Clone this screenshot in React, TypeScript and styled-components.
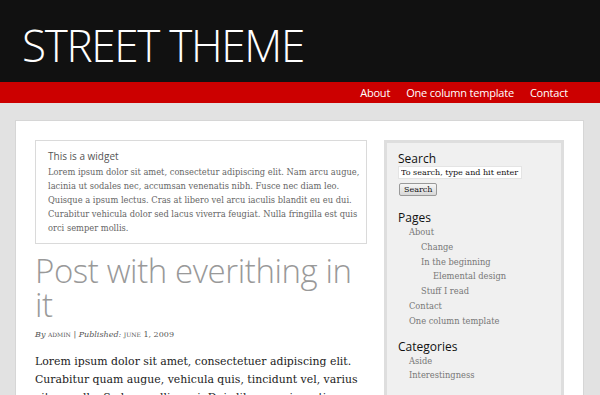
import React from 'react';
import styled, { createGlobalStyle } from 'styled-components';

const GlobalStyle = createGlobalStyle`
  html, body {
    margin: 0;
    padding: 0;
    background: #e2e2e2;
  }
  body {
    font-family: "Open Sans", "Liberation Sans", sans-serif;
    height: 395px;
    overflow: hidden;
  }
`;

const Header = styled.header`
  height: 82px;
  background: #111111;
  display: flex;
  align-items: center;
  padding-left: 22px;
`;

const SiteTitle = styled.h1`
  margin: 7px 0 0 0;
  color: #ffffff;
  font-family: "Open Sans", sans-serif;
  font-weight: 300;
  font-size: 44px;
  letter-spacing: -1.3px;
  line-height: 1;
`;

const NavBar = styled.nav`
  height: 21px;
  background: #cc0000;
  display: flex;
  justify-content: flex-end;
  align-items: center;
  gap: 16px;
  padding-right: 32px;
`;

const NavLink = styled.a`
  color: #ffffff;
  font-family: "Open Sans", sans-serif;
  font-size: 11px;
  letter-spacing: -0.2px;
  text-decoration: none;
`;

const Page = styled.div`
  padding: 17px 0 0 15px;
`;

const Card = styled.div`
  width: 569px;
  height: 300px;
  box-sizing: border-box;
  background: #ffffff;
  border: 1px solid #d6d6d6;
  display: flex;
  gap: 17px;
  padding: 19px 19px 0 19px;
  overflow: hidden;
`;

const Main = styled.div`
  width: 332px;
  flex-shrink: 0;
`;

const Widget = styled.div`
  border: 1px solid #dadada;
  padding: 8px 3px 8px 12px;
`;

const WidgetTitle = styled.div`
  font-family: "Open Sans", sans-serif;
  font-size: 10px;
  line-height: 14px;
  color: #555;
  margin-bottom: 2px;
`;

const SerifText = styled.p<{ size: number; lh: number; color: string }>`
  margin: 0;
  font-family: "DejaVu Serif", Georgia, serif;
  font-size: ${p => p.size}px;
  line-height: ${p => p.lh}px;
  color: ${p => p.color};
`;

const PostTitle = styled.h2`
  margin: 10px 0 0 0;
  font-family: "Open Sans", sans-serif;
  font-weight: 300;
  font-size: 33px;
  line-height: 34px;
  color: #999;
  letter-spacing: -0.4px;
`;

const Meta = styled.div`
  margin: 8px 0 14px 0;
  font-family: "DejaVu Serif", Georgia, serif;
  font-size: 8px;
  color: #555;
  em {
    font-style: italic;
  }
  span {
    font-variant: small-caps;
  }
`;

const Sidebar = styled.aside`
  width: 180px;
  height: 300px;
  flex-shrink: 0;
  box-sizing: border-box;
  background: #f0f0f0;
  border: 3px solid #dedede;
  padding: 8px 11px 0 11px;
`;

const SideHeading = styled.h3`
  margin: 0;
  font-family: "Open Sans", sans-serif;
  font-weight: 400;
  font-size: 12px;
  line-height: 15px;
  color: #111;
`;

const SearchInput = styled.input`
  display: block;
  width: 124px;
  height: 13px;
  box-sizing: border-box;
  border: 1px solid #e4e4e4;
  background: #fff;
  padding: 0 2px;
  margin: 0;
  font-family: "DejaVu Serif", Georgia, serif;
  font-size: 8px;
  color: #111;
  outline: none;
`;

const SearchButton = styled.button`
  display: block;
  margin: 4px 0 14px 1px;
  height: 13px;
  padding: 0 4px;
  border: 1px solid #999;
  border-radius: 2px;
  background: linear-gradient(#f6f6f6, #d8d8d8);
  font-family: "DejaVu Serif", Georgia, serif;
  font-size: 8px;
  line-height: 11px;
  color: #111;
`;

const List = styled.ul`
  list-style: none;
  margin: 0 0 10px 0;
  padding: 0;
`;

const Item = styled.li<{ level: number }>`
  padding-left: ${p => 11 + p.level * 12}px;
  font-family: "DejaVu Serif", Georgia, serif;
  font-size: 8.3px;
  line-height: 14.8px;
  color: #777;
`;

const pages: [string, number][] = [
  ['About', 0],
  ['Change', 1],
  ['In the beginning', 1],
  ['Elemental design', 2],
  ['Stuff I read', 1],
  ['Contact', 0],
  ['One column template', 0],
];

const App = (): JSX.Element => {
  return (
    <>
      <GlobalStyle />
      <Header>
        <SiteTitle>STREET THEME</SiteTitle>
      </Header>
      <NavBar>
        <NavLink href="#">About</NavLink>
        <NavLink href="#">One column template</NavLink>
        <NavLink href="#">Contact</NavLink>
      </NavBar>
      <Page>
        <Card>
          <Main>
            <Widget>
              <WidgetTitle>This is a widget</WidgetTitle>
              <SerifText size={8.3} lh={14} color="#666">
                Lorem ipsum dolor sit amet, consectetur adipiscing elit. Nam arcu augue,
                lacinia ut sodales nec, accumsan venenatis nibh. Fusce nec diam leo.
                Quisque a ipsum lectus. Cras at libero vel arcu iaculis blandit eu eu dui.
                Curabitur vehicula dolor sed lacus viverra feugiat. Nulla fringilla est quis
                orci semper mollis.
              </SerifText>
            </Widget>
            <PostTitle>Post with everithing in it</PostTitle>
            <Meta>
              <em>By</em> <span>admin</span> | <em>Published:</em> <span>june 1, 2009</span>
            </Meta>
            <SerifText size={10.9} lh={18} color="#222">
              Lorem ipsum dolor sit amet, consectetuer adipiscing elit. Curabitur quam augue,
              vehicula quis, tincidunt vel, varius vitae, nulla. Sed convallis orci. Duis libero
              orci, pretium a, convallis quis, pellentesque a, dolor.
            </SerifText>
          </Main>
          <Sidebar>
            <SideHeading>Search</SideHeading>
            <SearchInput defaultValue="To search, type and hit enter" />
            <SearchButton>Search</SearchButton>
            <SideHeading>Pages</SideHeading>
            <List>
              {pages.map(([name, level]) => (
                <Item key={name} level={level}>{name}</Item>
              ))}
            </List>
            <SideHeading>Categories</SideHeading>
            <List>
              <Item level={0}>Aside</Item>
              <Item level={0}>Interestingness</Item>
            </List>
            <SideHeading>Archives</SideHeading>
          </Sidebar>
        </Card>
      </Page>
    </>
  );
};

export default App;
